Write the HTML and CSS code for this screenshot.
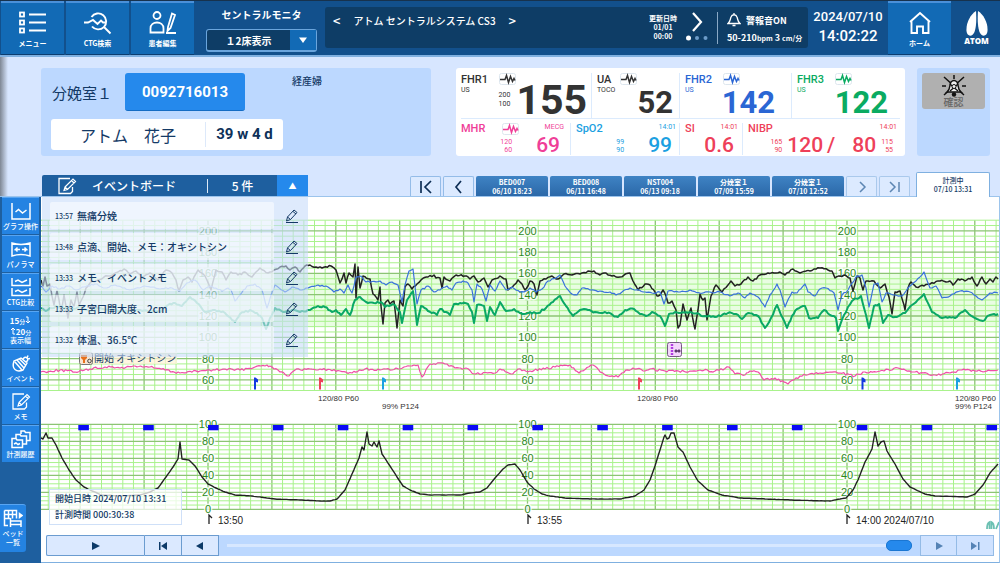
FILE: index.html
```html
<!DOCTYPE html>
<html lang="ja">
<head>
<meta charset="utf-8">
<title>セントラルモニタ</title>
<link rel="stylesheet" href="styles.css">
</head>
<body>
<svg class="defs" aria-hidden="true">
  <symbol id="pulse" viewBox="0 0 17 12"><rect x=".5" y=".5" width="16" height="11" rx="2" fill="#fff" stroke="#dde6ee"/><path d="M1 6.500h5l1.500-4 2 7 2-6 2 5 1.500-3 1 2" fill="none" stroke="currentColor" stroke-width="1.500"/></symbol>
  <symbol id="pen" viewBox="0 0 14 14"><path d="M2.500 8 9 1l3 2.500-6.500 7L1.500 12zM8 2.500l3 2.500M2.500 8l3 2.500M1 13.500h12" fill="none" stroke="currentColor"/></symbol>
  <symbol id="memo" viewBox="0 0 20 18"><path d="M15.500 10v4.500l-2 2H2V1.500h11" fill="none" stroke="currentColor" stroke-width="1.300"/><path d="M8 10 16 2l2.500 2.500-8 8L7 13.500zM14.500 3.500l2.500 2.500M8 10l2.500 2.500" fill="none" stroke="currentColor" stroke-width="1.200"/></symbol>
</svg>

<header class="topbar">
  <button class="tile"><svg width="28" height="24" viewBox="0 0 28 24"><g fill="none" stroke="#fff" stroke-width="1.800"><rect x="1" y="1.500" width="4" height="4"/><rect x="1" y="9.500" width="4" height="4"/><rect x="1" y="17.500" width="4" height="4"/><path d="M10 3.500h17M10 11.500h17M10 19.500h17"/></g></svg><span>メニュー</span></button>
  <button class="tile"><svg width="28" height="24" viewBox="0 0 28 24"><g fill="none" stroke="#fff" stroke-width="1.900"><path d="M7.500 6a8 8 0 1 1 .5 9.500M20.500 16.500l6 6"/><path d="M0 11.500h4l5-2.500 4.500 4L17 9.500l2 2h3"/></g></svg><span>CTG検索</span></button>
  <button class="tile"><svg width="28" height="24" viewBox="0 0 28 24"><g fill="none" stroke="#fff" stroke-width="1.800"><circle cx="8" cy="4.500" r="3.500"/><path d="M1.500 21.500v-4c0-8 13-8 13 0v4zM19 16l4-13.500 3 1.500-4.500 13-3 3zM17 22h10"/></g></svg><span>患者編集</span></button>
  <div class="monitor">
    <label for="beds">セントラルモニタ</label>
    <div class="pick"><select id="beds"><option>１2床表示</option></select><svg width="26" height="20" viewBox="0 0 26 20"><path d="M9 7.500h8l-4 5.500z" fill="#fff"/></svg></div>
  </div>
  <section class="system">
    <div class="system-name"><button>&lt;</button><span>アトム セントラルシステム CS3</span><button>&gt;</button></div>
    <div class="updated">更新日時<br>01/01<br>00:00</div>
    <button class="pager" aria-label="次へ"><svg width="24" height="32" viewBox="0 0 24 32"><path d="m8 3 8 9-8 9" fill="none" stroke="#fff" stroke-width="2.200"/><circle cx="3.500" cy="28" r="2.500" fill="#fff"/><circle cx="12" cy="28" r="2" fill="#6d9cc9"/><circle cx="20.500" cy="28" r="2" fill="#6d9cc9"/></svg></button>
    <div class="alarm">
      <div class="alarm-top"><svg width="14" height="15" viewBox="0 0 14 15"><path d="M7 1v1.500M1 11.500h12c-2.500-2-2-4-3-6.500-1-3-5-3-6 0-1 2.500-.5 4.500-3 6.500zM5.500 13.500h3" fill="none" stroke="#fff" stroke-width="1.300"/></svg><b>警報音ON</b></div>
      <div class="alarm-range">50-210<small>bpm</small> 3 <small>cm/分</small></div>
    </div>
  </section>
  <div class="clock"><time>2024/07/10</time><time>14:02:22</time></div>
  <button class="tile"><svg width="24" height="24" viewBox="0 0 24 24"><path d="M2 11 12 2l10 9M3.500 10v12H9v-6.500h6V22h5.500V10" fill="none" stroke="#fff" stroke-width="1.900"/></svg><span>ホーム</span></button>
  <div class="logo"><svg width="22" height="25" viewBox="0 0 22 25"><path d="M10 0C4 4 0 12 .5 20c.5 6 6 6 8 1 2-6 2-13 1.500-21z" fill="#fff"/><path d="M12 0c6 4 10 12 9.500 20-.5 6-6 6-8 1-2-6-2-13-1.500-21z" fill="#fff"/></svg><b>ATOM</b></div>
</header>

<section class="summary">
  <div class="patient">
    <div class="patient-id"><span class="room">分娩室１</span><button>0092716013</button><span class="parity">経産婦</span></div>
    <div class="patient-name"><span>アトム　花子</span><b>39 w 4 d</b></div>
  </div>

  <div class="vitals">
    <div class="vitals-row">
      <div class="vital fhr1"><b>FHR1</b><div class="head"><svg width="17" height="12"><use href="#pulse"/></svg></div><span>US</span><div class="read"><small>200<br>100</small><strong>155</strong></div></div>
      <div class="vital ua"><b>UA</b><div class="head"><svg width="17" height="12"><use href="#pulse"/></svg></div><span>TOCO</span><div class="read"><strong>52</strong></div></div>
      <div class="vital fhr2"><b>FHR2</b><div class="head"><svg width="17" height="12"><use href="#pulse"/></svg></div><span>US</span><div class="read"><strong>142</strong></div></div>
      <div class="vital fhr3"><b>FHR3</b><div class="head"><svg width="17" height="12"><use href="#pulse"/></svg></div><span>US</span><div class="read"><strong>122</strong></div></div>
    </div>
    <div class="vitals-row lower">
      <div class="vital mhr"><b>MHR</b><div class="head"><svg width="17" height="12"><use href="#pulse"/></svg><small>MECG</small></div><div class="read"><small>120<br>60</small><strong>69</strong></div></div>
      <div class="vital spo2"><b>SpO2</b><div class="head"><small>14:01</small></div><div class="read"><small>99<br>90</small><strong>99</strong></div></div>
      <div class="vital si"><b>SI</b><div class="head"><small>14:01</small></div><div class="read"><strong>0.6</strong></div></div>
      <div class="vital nibp"><b>NIBP</b><div class="head"><small>14:01</small></div><div class="read"><small>165<br>90</small><strong>120<i>/</i></strong><strong>80</strong><small>115<br>55</small></div></div>
    </div>
  </div>

  <div class="confirm"><button><svg width="24" height="22" viewBox="0 0 24 22"><path d="M2 2l20 18M22 2 2 20M12 0v4M0 11h4M20 11h4" stroke="#111" stroke-width="1.500"/><path d="M5 17c4-3 2-7 4-10 2-2 4-2 6 0 2 3 0 7 4 10z" fill="#eee" stroke="#111" stroke-width="1.500"/><path d="m8 16 8-7M16 16 8 9" stroke="#111" stroke-width="1.300"/><circle cx="12" cy="19.500" r="2.200" fill="#111"/><circle cx="12" cy="11.500" r="2" fill="#eee" stroke="#111"/></svg>確認</button></div>
</section>

<main class="workspace">
  <div class="tabbar">
    <div class="board-head"><svg width="20" height="18"><use href="#memo"/></svg><span class="board-title">イベントボード</span><span class="board-count">5 件</span><button aria-label="閉じる">▲</button></div>
    <nav class="tabs">
      <button class="step" aria-label="最初"><svg width="16" height="14" viewBox="0 0 16 14"><path d="M3 1v12M13 1 7 7l6 6" fill="none" stroke="currentColor" stroke-width="1.700"/></svg></button>
      <button class="step" aria-label="前"><svg width="16" height="14" viewBox="0 0 16 14"><path d="m10 1-5 6 5 6" fill="none" stroke="currentColor" stroke-width="1.700"/></svg></button>
      <button class="tab">BED007<br>06/10 18:23</button>
      <button class="tab">BED008<br>06/11 16:48</button>
      <button class="tab">NST004<br>06/13 09:18</button>
      <button class="tab">分娩室１<br>07/09 15:59</button>
      <button class="tab">分娩室１<br>07/10 12:52</button>
      <button class="step dim" aria-label="次"><svg width="16" height="14" viewBox="0 0 16 14"><path d="m6 2 5 5-5 5" fill="none" stroke="currentColor" stroke-width="1.500"/></svg></button>
      <button class="step dim" aria-label="最後"><svg width="16" height="14" viewBox="0 0 16 14"><path d="m3 2 5 5-5 5M12 2v10" fill="none" stroke="currentColor" stroke-width="1.500"/></svg></button>
      <button class="tab active">計測中<br>07/10 13:31</button>
    </nav>
  </div>

  <div class="body">
    <aside class="side">
      <button><svg width="20" height="19" viewBox="0 0 20 19"><path d="M1 1v16h18V1M4.500 10l3-2.500 4 3.500 4-3" /></svg>グラフ操作</button>
      <button><svg width="20" height="19" viewBox="0 0 20 19"><path d="M1 3q9 3 18 0v13q-9-3-18 0zM9 9.500H4.500l2-2M4.500 9.500l2 2M11 9.500h4.500l-2-2M15.500 9.500l-2 2"/></svg>パノラマ</button>
      <button><svg width="20" height="19" viewBox="0 0 20 19"><path d="M1 0v7.500h18V0M4 3.500l3-1.500 4 2.500 5-2.500M1 10v7.500h18V10M4 13.500l3-1.500 4 2.500 5-2.500"/></svg>CTG比較</button>
      <button><span class="speed"><span><b>15</b>分<svg width="4" height="8" viewBox="0 0 4 8"><path d="M0 1h2v6M0 5l2 2 2-2"/></svg></span><span><svg width="4" height="8" viewBox="0 0 4 8"><path d="M4 7H2V1M0 3l2-2 2 2"/></svg><b>20</b>分</span></span>表示幅</button>
      <button><svg width="20" height="19" viewBox="0 0 20 19"><path d="M3 7q-2 6 1 8.500t8 .5l4-7-6-5zM4 8l7 8M6 6l7 8M8.500 5l6 6M12 5q2-3 4-1t-1 4M16 4l1-2.500M16.500 5 19 4.500"/></svg>イベント</button>
      <button><svg width="20" height="19" viewBox="0 0 20 18"><use href="#memo"/></svg>メモ</button>
      <button><svg width="20" height="19" viewBox="0 0 20 19"><path d="M1 8.500h4l1 1.500h5.500v7.500H1zM5 8V4.500h4L10 6h5.500v8h-4M10 4V1h3.500l1 1.500H19v8h-3.500M3 14l2-1 2 1.500 2-1"/></svg>計測履歴</button>
      <button class="beds"><svg width="20" height="19" viewBox="0 0 20 19"><path d="M1.500 1.500h12v8M1.500 1.500v15H5M1.500 5.500h12M1.500 9.500h6M5.500 1.500v8M9.500 1.500v8M7.500 9v9M7.500 15.500h10.500V18M8 12h10v3"/><path d="M16.500 4.500l2.500 2-2.500 2z" fill="#fff"/></svg>ベッド<br>一覧</button>
    </aside>

    <div class="stage">
      <svg class="chart" id="chart" viewBox="41 197 958 335" role="img" aria-label="胎児心拍数と陣痛のグラフ"></svg>

      <ul class="events">
        <li><div><time>13:57</time>無痛分娩</div><button aria-label="編集"><svg width="14" height="14"><use href="#pen"/></svg></button></li>
        <li><div><time>13:48</time>点滴、開始、メモ：オキシトシン</div><button aria-label="編集"><svg width="14" height="14"><use href="#pen"/></svg></button></li>
        <li><div><time>13:33</time>メモ、イベントメモ</div><button aria-label="編集"><svg width="14" height="14"><use href="#pen"/></svg></button></li>
        <li><div><time>13:33</time>子宮口開大度、2cm</div><button aria-label="編集"><svg width="14" height="14"><use href="#pen"/></svg></button></li>
        <li><div><time>13:32</time>体温、36.5℃</div><button aria-label="編集"><svg width="14" height="14"><use href="#pen"/></svg></button></li>
      </ul>

      <div class="started">開始日時 2024/07/10 13:31<br>計測時間 000:30:38</div>

      <div class="player">
        <button class="play" aria-label="再生"><svg width="10" height="10" viewBox="0 0 10 10"><path d="M1 1l8 4-8 4z"/></svg></button>
        <button aria-label="先頭へ"><svg width="10" height="10" viewBox="0 0 10 10"><path d="M1 1h1.500v8H1zM9 1v8L3 5z"/></svg></button>
        <button aria-label="戻る"><svg width="10" height="10" viewBox="0 0 10 10"><path d="M8 1v8L1 5z"/></svg></button>
        <div class="seek"><input type="range" min="0" max="100" value="100" aria-label="再生位置"></div>
        <button class="dim" aria-label="進む"><svg width="10" height="10" viewBox="0 0 10 10"><path d="M2 1l7 4-7 4z"/></svg></button>
        <button class="dim" aria-label="末尾へ"><svg width="10" height="10" viewBox="0 0 10 10"><path d="M1 1l6 4-6 4zM8 1h1.500v8H8z"/></svg></button>
      </div>
    </div>
  </div>
</main>
<script src="chart.js"></script>
</body>
</html>
```
FILE: styles.css
```css
* { box-sizing: border-box; }
body {
  margin: 0;
  min-height: 100vh;
  display: flex;
  flex-direction: column;
  background: #d7e6ff;
  color: #143a66;
  font-family: "Noto Sans CJK JP", sans-serif;
  font-size: 12px;
}
button, select { font: inherit; color: inherit; border: 0; padding: 0; margin: 0; background: none; }
.defs { position: absolute; width: 0; height: 0; }
svg { flex: none; }

/* top bar */
.topbar {
  display: flex;
  height: 57px;
  padding-left: 1px;
  background: #12508c;
  border-top: 1px solid #17324d;
  border-bottom: 2px solid #7fb0e0;
  color: #fff;
}
.tile {
  width: 63px;
  margin-right: 2px;
  display: flex;
  flex-direction: column;
  align-items: center;
  gap: 3px;
  padding-top: 8px;
  background: #126ab5;
  border-top: 2px solid #4a90d9;
  border-bottom: 1px solid #0b3d70;
  font-size: 7px;
  font-weight: 700;
  line-height: 10px;
}
.monitor { width: 129px; padding: 5px 8px 0 10px; display: flex; flex-direction: column; gap: 5px; }
.monitor label { text-align: center; font-size: 10px; font-weight: 700; line-height: 18px; }
.pick { display: flex; height: 23px; border: 1px solid #6aa5dd; border-width: 1px 1px 2px; border-radius: 3px; background: #0e3d66; }
.pick select { flex: 1; min-width: 0; appearance: none; text-align: center; text-align-last: center; font-size: 10px; font-weight: 700; }
.pick svg { background: #126ab5; }
.system { flex: 1; display: flex; margin: 6px 0; height: 41px; background: #0e3d66; border-radius: 3px; }
.system-name { flex: 1; display: flex; align-items: flex-start; gap: 13px; padding: 5px 8px; font-size: 10px; font-weight: 500; line-height: 18px; }
.system-name button { font-size: 13px; }
.updated { padding-top: 7px; text-align: center; font-size: 7px; font-weight: 700; line-height: 9px; }
.pager { width: 40px; }
.alarm { width: 91px; border-left: 1px solid #8aa9c6; margin: 5px 0 4px; padding-left: 9px; white-space: nowrap; }
.alarm-top { display: flex; gap: 5px; font-size: 9px; line-height: 18px; }
.alarm-range { font-size: 9px; font-weight: 700; line-height: 16px; }
.alarm-range small { font-size: 7px; }
.clock { width: 80px; display: flex; flex-direction: column; align-items: center; padding-top: 6px; font: 500 13px/20px Roboto, sans-serif; }
.clock time + time { font-size: 15px; line-height: 18px; }
.logo { width: 47px; display: flex; flex-direction: column; align-items: center; padding-top: 10px; font: 700 8px/9px "Open Sans", sans-serif; }

/* patient and vitals */
.summary {
  display: flex;
  padding: 11px 10px 16px 41px;
  background: linear-gradient(90deg, #7e8794, #d7e6ff 8px);
}
.patient { width: 390px; height: 88px; padding: 5px 10px; background: #bcd8ff; border-radius: 3px; }
.patient-id { display: flex; }
.room { width: 74px; font-size: 15px; line-height: 40px; padding-left: 1px; white-space: nowrap; }
.patient-id button { width: 120px; height: 38px; border-radius: 3px; background: #2589ec; border-bottom: 1px solid #146cc4; color: #fff; font: 700 15px/36px Roboto, sans-serif; }
.parity { padding-left: 47px; font-size: 10px; font-weight: 500; line-height: 16px; }
.patient-name { width: 232px; margin-top: 6px; display: flex; align-items: center; padding: 3px 0; background: #fff; border-radius: 3px; line-height: 25px; }
.patient-name span { flex: 1; text-align: center; font-size: 16px; line-height: 26px; height: 25px; }
.patient-name b { width: 78px; text-align: center; border-left: 1px solid #dde9fa; font: 700 15px/25px Roboto, sans-serif; color: #0d3159; white-space: nowrap; }
.vitals { flex: 1; margin: 0 12px 0 25px; height: 88px; background: #fff; border-radius: 3px; font-family: Roboto, sans-serif; }
.vitals-row { display: flex; height: 51px; padding-top: 5px; margin: 0 5px; border-bottom: 1px solid #dcebfd; }
.vitals-row.lower { height: 36px; border: 0; padding-top: 4px; }
.vital {
  display: grid;
  grid-template-columns: auto 1fr;
  grid-template-rows: 12px 30px;
  column-gap: 11px;
  padding: 0 5px;
  border-left: 1px solid #dcebfd;
}
.vital:first-child { border: 0; padding-left: 0; }
.vital b { font-size: 11px; line-height: 13px; font-weight: 500; }
.vital > span { font-size: 7px; line-height: 11px; }
.vital small { font-size: 7px; line-height: 9px; text-align: right; }
.head { display: flex; justify-content: flex-start; gap: 10px; }
.read { display: flex; justify-content: flex-end; align-items: flex-end; gap: 6px; min-width: 0; }
.vital strong { font-size: 31px; line-height: 24px; font-weight: 700; }
.fhr1 { width: 130px; color: #333; padding-right: 4px; }
.fhr1 small { align-self: center; }
.fhr1 strong { font-size: 41px; line-height: 30px; }
.ua { width: 88px; color: #333; column-gap: 5px; padding-right: 6px; }
.fhr2 { width: 112px; color: #2a66d4; padding-right: 16px; }
.fhr3 { flex: 1; color: #0aab62; padding-right: 12px; }
.lower .vital { grid-template-rows: 10px 21px; column-gap: 4px; }
.lower .vital b { line-height: 12px; }
.lower .head { justify-content: flex-end; margin-right: -4px; }
.lower .read { grid-column: 1 / 3; gap: 15px; }
.lower strong { font-size: 21px; line-height: 18px; font-weight: 500; }
.lower small { line-height: 8px; white-space: nowrap; }
.mhr { width: 109px; color: #ef3f98; padding-right: 10px; }
.mhr .head { gap: 26px; }
.lower .mhr .read { gap: 24px; }
.spo2 { width: 109px; color: #1ba0e1; padding-right: 7px; }
.lower .spo2 .read { gap: 24px; }
.si { width: 63px; color: #ee4059; padding-right: 8px; }
.nibp { flex: 1; color: #ee4059; padding-right: 7px; }
.lower .nibp .read { gap: 5px; }
.nibp i { font-style: normal; padding: 0 12px 0 4px; }
.confirm { width: 73px; padding: 5px; background: #bcd8ff; border-radius: 3px; }
.confirm button { width: 100%; height: 36px; display: flex; flex-direction: column; align-items: center; background: #b0b0b0; border-radius: 3px; color: #666; font-size: 10px; font-weight: 500; line-height: 10px; padding-top: 2px; }

/* tabs */
.workspace { flex: 1; display: flex; flex-direction: column; }
.tabbar { display: flex; align-items: flex-end; height: 25px; padding: 0 10px 0 42px; border-bottom: 1px solid #9cc4ec; background: linear-gradient(90deg, #7e8794, #d7e6ff 8px); }
.board-head { display: flex; align-items: center; width: 266px; height: 21px; background: #1e5f9f; border-radius: 2px 2px 0 0; color: #fff; font-size: 12px; font-weight: 500; line-height: 20px; }
.board-head svg { margin: 0 15px 0 15px; }
.board-title { flex: 1; }
.board-count { width: 70px; text-align: center; border-left: 1px solid #dce9f7; line-height: 14px; }
.board-head button { width: 31px; height: 21px; background: #2589ec; font-size: 8px; line-height: 20px; }
.tabs { flex: 1; display: flex; justify-content: flex-end; align-items: flex-end; gap: 2px; }
.step { width: 31px; height: 20px; background: #dceaff; border: 1px solid #94bce8; border-bottom: 0; border-radius: 2px 2px 0 0; color: #0d2e55; line-height: 0; }
.step.dim { color: #5d86b3; border-color: #aac9ec; }
.tab { width: 72px; height: 20px; background: linear-gradient(#3f83c4, #2b68a8); border-radius: 2px 2px 0 0; color: #fff; font-size: 7px; font-weight: 700; line-height: 9px; padding-top: 2px; }
.tab.active { width: 74px; height: 25px; margin: 0 0 -1px 4px; background: #fff; border: 1px solid #7fb0e0; border-bottom: 0; color: #143a66; padding: 0 0 1px; line-height: 9px; font-weight: 500; }

/* body */
.body { flex: 1; display: flex; }
.side { width: 41px; display: flex; flex-direction: column; gap: 1px; padding: 0 2px 11px; background: #1e5f9f; color: #fff; }
.side button { height: 37px; display: flex; flex-direction: column; align-items: center; gap: 1px; padding-top: 4px; background: #2483e2; border-top: 1px solid #58a5f2; font-size: 7px; font-weight: 500; line-height: 9px; white-space: nowrap; }
.side svg { fill: none; stroke: #fff; stroke-width: 1.500; }
.side .beds { width: 26px; height: 48px; margin: auto 0 0 -2px; border-radius: 0 3px 3px 0; }
.speed { display: flex; flex-direction: column; font-size: 6px; line-height: 10px; height: 19px; }
.speed b { font-size: 8px; }
.speed svg { stroke-width: 1; margin: 0 1px; }
.stage { flex: 1; min-width: 0; position: relative; background: #fff; border-right: 1px solid #9cc4ec; border-bottom: 1px solid #7fb0e0; }
.chart { display: block; width: 100%; height: auto; font-family: "Liberation Sans", sans-serif; }
.trace { fill: none; stroke-linejoin: round; }
.axis { fill: #2c8a1c; font-size: 11px; text-anchor: middle; paint-order: stroke; stroke: #fff; stroke-width: 3px; stroke-opacity: .8; }
.note { fill: #333; font-size: 8px; }
.tick { fill: #222; font-size: 10px; }
.jp { fill: #143a66; font-family: "Noto Sans CJK JP", sans-serif; font-size: 10px; }
.events { position: absolute; left: 1px; top: 0; width: 266px; margin: 0; padding: 5px 0 4px 8px; list-style: none; display: flex; flex-direction: column; gap: 4px; background: rgba(198, 219, 250, .58); }
.events li { display: flex; height: 27px; }
.events li div { width: 224px; display: flex; align-items: center; gap: 4px; padding-left: 5px; background: rgba(250, 252, 255, .6); border-radius: 2px; font-size: 10px; font-weight: 500; }
.events time { font-size: 7px; }
.events button { flex: 1; padding-left: 2px; line-height: 0; }
.started { position: absolute; left: 8px; top: 292px; width: 133px; padding: 1px 5px; background: rgba(255, 255, 255, .75); border: 1px solid #cfe0f8; font-size: 9px; font-weight: 500; line-height: 16px; white-space: nowrap; }
.player { display: flex; margin: 3px 5px 6px; height: 21px; background: #bcd8ff; }
.player button { width: 37px; background: #dbe9ff; border: 1px solid #6b9cd0; border-left-width: 0; fill: #0d3a68; line-height: 0; }
.player .play { width: 99px; border-left-width: 1px; border-radius: 2px 0 0 2px; }
.player .dim { fill: #5583b5; border-color: #94bbe6; background: #cfe2ff; }
.player .seek + .dim { border-left-width: 1px; }
.seek { flex: 1; display: flex; align-items: center; padding: 0 8px; }
.seek input { appearance: none; width: 100%; height: 3px; margin: 0; background: #d7e7ff; }
.seek input::-webkit-slider-thumb { appearance: none; width: 26px; height: 11px; border-radius: 5px; background: #2589ec; border: 1px solid #1a76d2; }
```
FILE: chart.js
```javascript
const NS = 'http://www.w3.org/2000/svg';
const chart = document.getElementById('chart');

function add(tag, attrs, text) {
  const node = document.createElementNS(NS, tag);
  for (const key in attrs) node.setAttribute(key, attrs[key]);
  if (text) node.textContent = text;
  chart.appendChild(node);
}

const LEFT = 41, RIGHT = 999, MINUTE = 63.9, FIRST = 208;

function grid(top, bottom, rows, perMajor, offset) {
  for (let i = -16; i < 76; i++) {
    const x = FIRST + i * MINUTE / 6;
    if (x < LEFT || x > RIGHT) continue;
    const major = i % 6 === 0;
    add('line', { x1: x, x2: x, y1: top, y2: bottom, stroke: major ? '#8cc474' : '#a9f28c', 'stroke-width': major ? 1.3 : 1 });
  }
  for (let r = 0; r <= rows; r++) {
    const y = top + (bottom - top) * r / rows;
    const major = (r + offset) % perMajor === 0;
    add('line', { x1: LEFT, x2: RIGHT, y1: y, y2: y, stroke: major ? '#8cc474' : '#a9f28c', 'stroke-width': major ? 1.3 : 1 });
  }
}

function trace(data, color, width, noise) {
  const p = data.trim().split(/\s+/).map(s => s.split(',').map(Number));
  let seed = 7, out = [];
  for (let i = 0; i < p.length - 1; i++) {
    const [x0, y0] = p[i], [x1, y1] = p[i + 1];
    const n = Math.max(1, Math.round((x1 - x0) / 2));
    for (let k = 0; k < n; k++) {
      seed = (seed * 1103515245 + 12345) % 2147483648;
      const jitter = k ? (seed / 2147483648 - 0.5) * noise : 0;
      out.push((x0 + (x1 - x0) * k / n).toFixed(1) + ',' + (y0 + (y1 - y0) * k / n + jitter).toFixed(1));
    }
  }
  out.push(p[p.length - 1].join());
  add('polyline', { class: 'trace', points: out.join(' '), stroke: color, 'stroke-width': width });
}

add('rect', { x: LEFT, y: 273, width: 958, height: 54, fill: '#e9fde2' });
grid(220.2, 390.5, 32, 4, 2);
grid(424.3, 509.3, 20, 4, 0);

for (const x of [208, 527.5, 847]) {
  for (let v = 200; v >= 60; v -= 20) add('text', { class: 'axis', x, y: 234.8 + (200 - v) * 1.0667 }, String(v));
  for (let v = 100; v >= 0; v -= 20) add('text', { class: 'axis', x, y: 428.3 + (100 - v) * 0.85 }, String(v));
}
for (let i = 0; i < 15; i++) add('rect', { x: 78.3 + i * 64.87, y: 425, width: 10.6, height: 5.3, fill: '#0a0af5' });

trace(`41,372 60,370 75,372 90,369 105,367 120,368 135,366 150,367 165,370 180,373 200,371 215,370 225,369 240,370 255,367 267,365 270,366 278,370 289,376 295,370 310,369 320,369 340,371 352,373 365,369 380,370 400,369 410,366 418,365 422,377 430,364 447,364 455,368 466,368 474,374 495,373 500,369 511,374 518,369 530,371 545,369 555,367 570,365 579,373 593,365 604,374 618,377 622,373 633,368 645,371 650,369 665,371 690,371 700,370 715,371 729,367 735,374 745,375 750,371 758,372 764,380 775,378 788,384 800,376 820,373 840,373 855,376 865,372 880,371 898,368 915,372 935,375 950,373 960,370 975,371 998,370`, '#f04fa8', 1.2, 2.4);

trace(`41,280 43,286 45,277 47,286 50,284 52,296 54,305 57,291 59,300 61,312 64,295 68,318 71,300 74,306 77,292 79,305 83,297 86,288 90,283 98,280 104,277 110,276 118,272 124,269 130,274 136,271 142,277 150,273 158,280 166,270 172,273 176,280 179,291 183,280 188,277 192,282 198,270 205,276 211,290 216,270 222,272 226,280 231,272 238,275 245,272 252,277 260,268 268,273 274,270 280,267 286,266 290,270 295,267 300,272 305,266 310,265 316,267 322,268 331,266 336,270 340,283 344,273 346,283 349,273 353,277 355,264 356,298 358,267 360,288 363,276 370,279 373,294 378,300 380,287 381,306 383,324 385,303 388,300 390,304 394,301 397,328 400,300 403,306 405,287 408,284 412,289 417,284 421,280 428,277 434,275 436,278 440,278 442,288 444,277 450,281 456,275 465,276 470,279 474,276 478,282 484,278 488,287 492,280 500,276 506,279 508,290 514,285 518,280 522,284 525,290 528,286 530,281 534,284 537,295 540,281 546,279 552,276 558,279 564,274 572,275 580,274 588,271 594,271 600,275 606,273 612,276 620,277 630,273 633,281 638,290 645,284 650,285 657,296 660,295 663,290 666,296 668,303 672,301 676,310 678,328 680,325 683,304 687,320 691,308 694,325 695,329 698,310 700,294 703,300 705,298 707,320 711,296 716,285 722,292 728,285 731,281 735,286 741,284 748,277 753,281 760,275 766,274 774,273 780,272 785,275 793,269 800,273 810,271 820,268 828,270 832,271 835,278 840,276 845,275 850,278 853,291 857,276 860,278 863,290 866,281 874,281 880,288 885,284 889,297 892,314 895,292 900,291 904,305 905,310 908,288 911,282 916,287 924,286 930,284 940,281 950,281 953,285 958,279 965,281 972,277 977,286 982,277 986,284 990,279 993,282 996,277 998,279`, '#222', 1.5, 2);

trace(`41,286 46,292 52,286 60,289 68,286 76,290 84,287 95,284 105,288 115,285 130,290 145,286 160,289 172,288 180,291 187,283 195,280 203,290 210,286 222,291 228,288 231,290 235,301 240,295 247,286 255,284 262,290 267,308 271,295 275,285 285,292 292,287 300,290 308,288 318,285 328,287 334,292 340,289 344,293 348,285 352,293 356,277 361,276 366,282 380,281 386,285 392,282 398,285 402,302 405,285 409,271 413,269 417,304 421,290 428,286 434,292 440,290 447,286 452,290 456,283 463,281 468,283 472,290 474,302 477,284 482,289 486,301 490,285 495,291 500,281 506,290 512,287 520,292 526,291 530,288 536,292 542,289 548,281 556,278 560,275 565,286 572,294 577,295 582,288 590,290 600,291 610,292 616,295 622,292 630,288 636,290 645,292 652,293 660,292 664,304 668,291 680,292 690,290 700,293 710,292 720,292 730,296 738,293 745,298 750,293 758,297 765,307 770,295 777,284 780,290 785,307 792,292 797,293 805,284 808,292 815,296 820,289 826,288 834,293 838,310 842,295 848,290 856,277 862,275 866,288 869,307 874,284 878,283 882,302 886,293 895,295 902,296 910,286 916,281 924,272 930,288 936,286 942,298 950,296 960,291 970,292 976,296 982,300 990,293 998,293`, '#3a72dc', 1.2, 1.6);

trace(`41,308 46,311 50,308 60,306 70,310 80,306 90,312 100,308 120,311 140,310 160,312 168,305 175,303 182,306 190,297 197,303 205,312 215,310 225,313 232,320 235,322 240,314 250,310 257,313 262,318 266,329 270,318 275,308 285,312 292,310 300,312 310,310 318,306 325,307 332,312 336,310 341,315 346,309 350,315 355,300 360,297 366,302 374,303 381,302 385,307 393,304 400,312 402,323 407,300 413,291 417,325 421,306 428,311 437,315 440,309 446,312 450,315 454,304 460,303 468,304 472,312 474,323 477,305 484,306 487,321 490,307 495,315 500,302 506,311 514,309 520,313 538,313 546,308 553,302 560,296 566,306 573,316 580,310 588,310 595,312 605,312 618,317 625,310 634,309 640,314 646,316 652,312 660,316 665,326 669,314 675,312 690,312 705,316 715,317 728,313 736,314 742,319 748,313 758,316 765,328 771,318 777,305 781,315 787,328 792,316 797,309 805,306 809,318 818,318 824,310 830,315 836,318 838,331 844,315 852,301 861,296 866,315 869,328 874,306 879,304 883,323 888,315 895,317 905,313 912,305 924,294 932,312 942,318 955,318 965,310 975,318 983,321 990,315 998,314`, '#0aa865', 2, 2);

trace(`41,438 43,439 46,433 48,438 52,438 56,445 62,458 69,470 76,480 84,487 92,491 102,495 120,496 140,495 150,492 158,488 166,477 173,467 178,459 180,442 182,459 189,460 195,466 202,477 208,484 216,488 225,492 235,495 252,496 275,499 300,500 320,501 330,501 337,499 345,490 352,474 359,458 362,447 364,450 367,432 369,444 372,446 374,442 377,447 379,441 382,454 390,466 397,477 403,486 410,490 420,494 430,495 460,495 470,493 480,492 487,488 495,478 503,469 508,465 515,464 520,470 527,482 534,489 542,494 550,496 565,498 590,499 620,499 635,496 644,490 650,480 655,466 660,450 664,437 665,435 667,439 669,438 671,433 674,433 678,447 683,452 690,467 698,481 708,490 722,495 740,498 765,499 790,500 825,501 830,501 840,499 846,498 853,490 858,480 865,462 872,449 875,432 878,446 881,442 884,441 887,451 895,464 903,479 910,487 925,494 935,496 967,497 975,494 983,485 990,473 998,464`, '#222', 1.4, 0.3);

// event flags
for (const [x, color] of [[254, '#1238e0'], [319, '#ee4059'], [382, '#1ba0e1'], [638, '#ee4059'], [861.5, '#1238e0'], [956, '#1ba0e1']]) {
  add('path', { d: `M${x} 389.500v-12h1.500l2.500 2v3l-2-.5v7.500z`, fill: color });
}
for (const [x, y, text] of [[318, 401, '120/80 P60'], [382, 409, '99% P124'], [637, 401, '120/80 P60'], [955, 401, '120/80 P60'], [955, 409, '99% P124']]) {
  add('text', { class: 'note', x, y }, text);
}

// time marks
for (const [x, text] of [[208, '13:50'], [527, '13:55'], [846, '14:00 2024/07/10']]) {
  add('path', { d: `M${x + 1} 524v-9l3 3`, fill: 'none', stroke: '#222', 'stroke-width': 1.3 });
  add('text', { class: 'tick', x: x + 10, y: 523.5 }, text);
}

// drip start marker
add('rect', { x: 79, y: 352, width: 98, height: 12, fill: '#fff3d8', 'fill-opacity': .75 });
add('rect', { x: 79.5, y: 352.5, width: 13, height: 12, rx: 2, fill: '#f8e4d0', stroke: '#777' });
add('path', { d: 'M81 355h6v3l-2 2v3h-2v-3l-2-2z', fill: '#e8701c' });
add('circle', { cx: 89.500, cy: 361, r: 1.8, fill: 'none', stroke: '#444' });
add('text', { class: 'jp', x: 94, y: 362 }, '開始 オキシトシン');

// cervix marker
add('rect', { x: 667.5, y: 342.5, width: 14, height: 14, rx: 2, fill: '#f3d6fb', stroke: '#775a86' });
add('path', { d: 'M672 344v11', stroke: '#b03be0', 'stroke-width': 2.4, 'stroke-dasharray': '2 1' });
add('path', { d: 'M674.500 351h6M676 349.500v3M679 349.500v3', stroke: '#553366', 'stroke-width': 1.6 });

// watermark at the right edge
add('path', { d: 'M987 529q0-6 2.500-7v7M991.500 529v-7q2.500 1 2.500 7M996 529l3-7', fill: 'none', stroke: '#6cc0b2', 'stroke-width': 1.8 });
```
